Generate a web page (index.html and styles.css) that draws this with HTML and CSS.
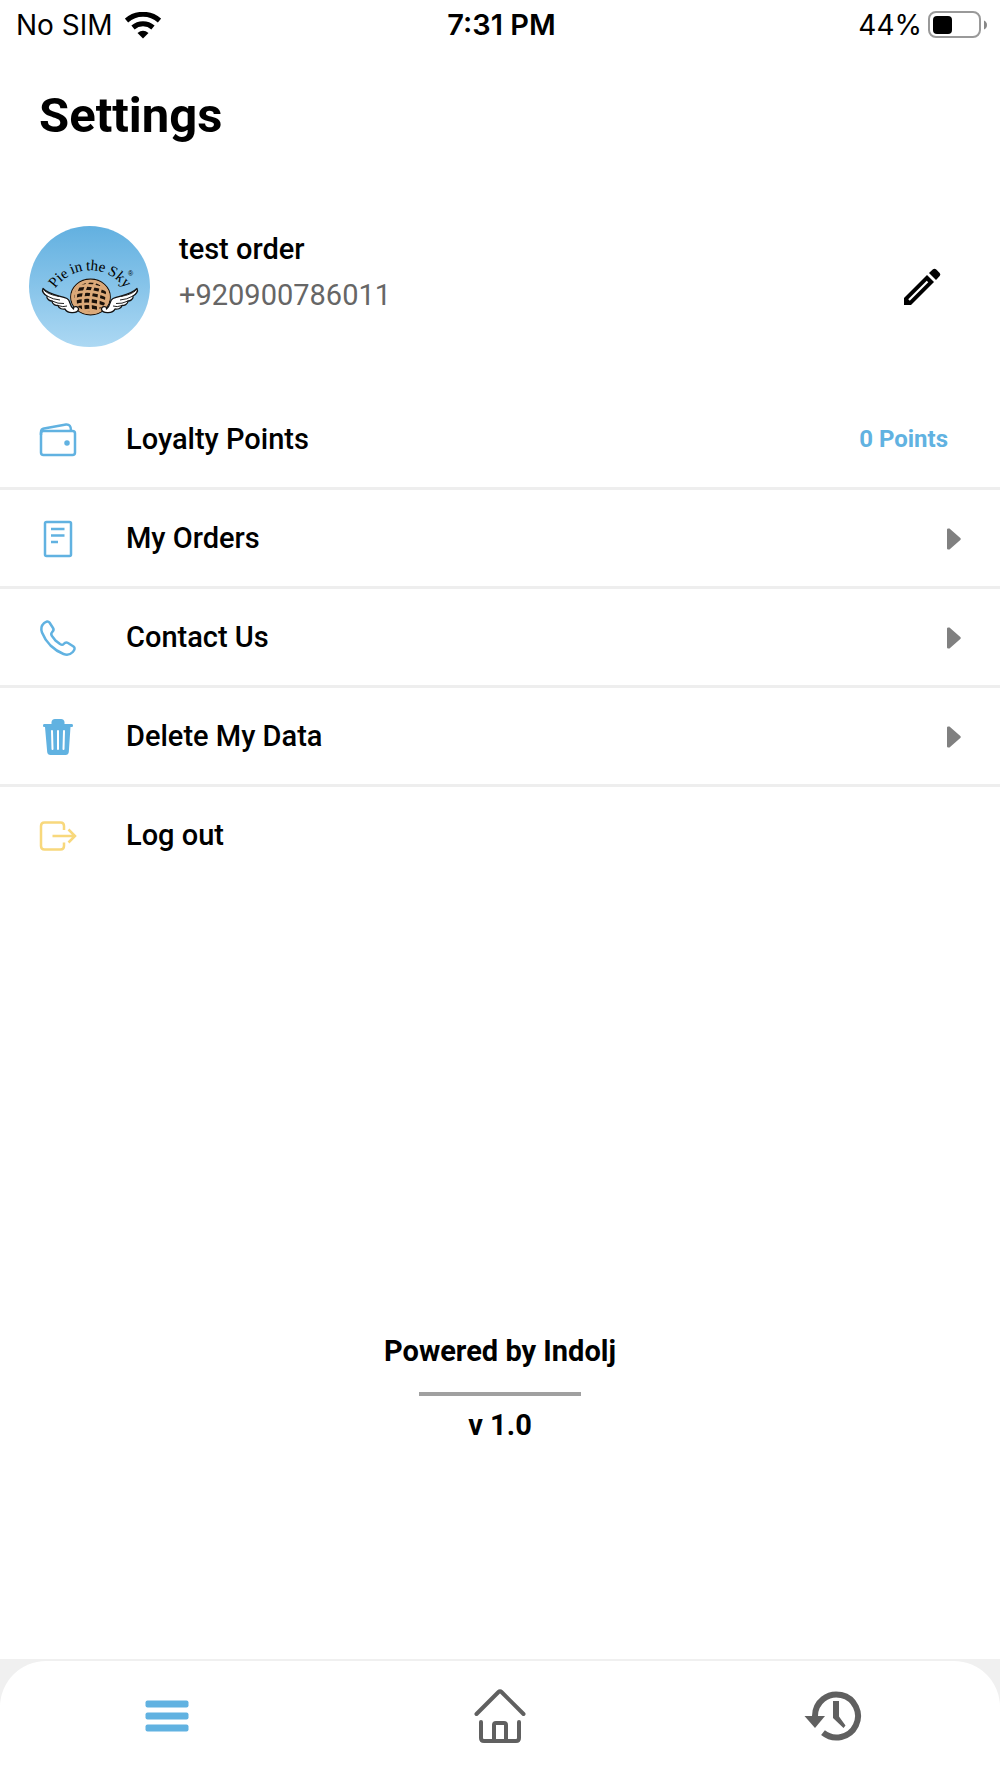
FILE: index.html
```html
<!DOCTYPE html>
<html lang="en">
<head>
<meta charset="utf-8">
<meta name="viewport" content="width=device-width, initial-scale=1">
<title>Settings</title>
<link rel="stylesheet" href="styles.css">
</head>
<body>
<div class="app">
  <div class="status-bar">
    <div class="carrier">
      <span>No SIM</span>
      <svg class="wifi" viewBox="0 0 36 27" aria-hidden="true">
        <path d="M1.500 8.500A25 25 0 0 1 34.500 8.500" fill="none" stroke="#000" stroke-width="5"/>
        <path d="M8 15.500A15.500 15.500 0 0 1 28 15.500" fill="none" stroke="#000" stroke-width="5"/>
        <path d="M12.500 21Q18 16.500 23.500 21L18 26.500Z"/>
      </svg>
    </div>
    <div class="clock">7:31 PM</div>
    <div class="power">
      <span>44%</span>
      <svg class="battery" viewBox="0 0 59 28" aria-hidden="true">
        <rect x="1" y="1" width="51" height="25" rx="7" fill="none" stroke="#999" stroke-width="2"/>
        <rect x="5" y="5" width="19" height="18" rx="4"/>
        <path d="M56 9.500Q59 11 59 14T56 18.500Z" fill="#888"/>
      </svg>
    </div>
  </div>

  <main class="main">
    <h1 class="title">Settings</h1>

    <section class="profile">
      <svg class="avatar" viewBox="0 0 121 121" role="img" aria-label="Pie in the Sky">
        <defs>
          <linearGradient id="sky" x1="0" y1="0" x2="0" y2="1">
            <stop offset="0" stop-color="#62b0e0"/>
            <stop offset="1" stop-color="#acd8f3"/>
          </linearGradient>
          <clipPath id="crust"><ellipse cx="61.500" cy="71" rx="18.500" ry="16.500"/></clipPath>
          <path id="arch" d="M21.500 72A42 42 0 0 1 100.500 72"/>
          <g id="wing">
            <path d="M14 62.500C12.500 65 15 68.500 18 70C17 73 21 75 23 75C23 78.500 27 79.500 29 79.500C30 83 34 83.500 36 83C38 87.500 48 88 49.500 83.500C50 80 44 79.500 44.500 83C40 80 42 74.500 38 72.500C31 69.500 20 69 14 62.500Z" fill="#fff" stroke="#111" stroke-width="1.300" stroke-linejoin="round"/>
            <path d="M14 63C18 68 24 69 30 70.500M18 70Q24 73.500 31 74M23 75Q29 78 35 77.500M29 79.500Q34 81.500 38 80" fill="none" stroke="#222" stroke-width="1"/>
          </g>
        </defs>
        <circle cx="60.500" cy="60.500" r="60.500" fill="url(#sky)"/>
        <text class="logo-text"><textPath href="#arch" startOffset="50%">Pie&thinsp;in&thinsp;the&thinsp;Sky</textPath></text>
        <text class="logo-mark" x="99" y="50">®</text>
        <ellipse cx="61.500" cy="71" rx="19.800" ry="17.800" fill="#dba979" stroke="#1c120a" stroke-width="1.200"/>
        <ellipse cx="61.500" cy="71" rx="16.500" ry="14.500" fill="#1c120a"/>
        <g clip-path="url(#crust)" fill="none" stroke="#dba979" stroke-width="2.600">
          <path d="M41 63Q62 54 83 67M41 69Q62 60 83 73M41 75Q62 66 83 79M41 81Q62 73 83 85M46 87Q62 80 80 90"/>
          <path d="M54 52Q42 68 49 90M61 52Q50 70 56 90M68 53Q58 70 63 90M75 54Q67 70 70 90M81 57Q76 70 77 90"/>
        </g>
        <ellipse cx="61.500" cy="71" rx="18" ry="16" fill="none" stroke="#dba979" stroke-width="2.600"/>
        <use href="#wing"/>
        <use href="#wing" transform="translate(122 0) scale(-1 1)"/>
      </svg>
      <div class="person">
        <div class="name">test order</div>
        <div class="phone">+920900786011</div>
      </div>
      <button class="edit" type="button" aria-label="Edit profile">
        <svg viewBox="0 0 38 38" aria-hidden="true">
          <path d="M1 37V30L24 7L31 14L8 37Z"/>
          <path d="M26 5L30 1.300Q31.500 0 33 1.300L36.700 5Q38 6.500 36.700 8L33 12Z"/>
          <path d="M6 32L24.500 13.500" stroke="#fff" stroke-width="2.200"/>
        </svg>
      </button>
    </section>

    <nav class="menu" aria-label="Settings">
      <a class="row" href="#loyalty">
        <svg class="row-icon line" viewBox="0 -1 36 36" aria-hidden="true">
          <rect x="1" y="9" width="34" height="24" rx="2.500"/>
          <path d="M1 13V10Q1 7 4 6.500L26 2.500Q31 2 31 8.500"/>
          <circle class="solid" cx="27" cy="21" r="1.500"/>
        </svg>
        <span>Loyalty Points</span>
        <span class="points">0 Points</span>
      </a>
      <a class="row" href="#orders">
        <svg class="row-icon line" viewBox="0 -1 36 36" aria-hidden="true">
          <rect x="5" y="1" width="26" height="34" rx="1.500"/>
          <path d="M11 8H24.500M11 14.500H24.500M11 21H18"/>
        </svg>
        <span>My Orders</span>
        <svg class="arrow" viewBox="0 -1 14 22" aria-hidden="true"><path d="M0 1.500Q0 0 2.500 0.600L13.300 10Q14.500 11 13.300 12L2.500 21.400Q0 22 0 20.500Z"/></svg>
      </a>
      <a class="row" href="#contact">
        <svg class="row-icon line" viewBox="0 -1 36 36" aria-hidden="true">
          <path d="M4 3.200Q7.500 0 9.500 2.500L13 8Q14.500 10.300 12 12.300Q10.500 13.700 12 16L15.500 20.500L20 24Q22.300 25.500 23.700 24Q25.700 21.500 28 23L33.500 26.500Q36 28.500 32.800 32Q29 36 23.500 34Q16.500 31.300 10.500 25.500Q4.700 19.500 2 12.500Q0 7 4 3.200Z"/>
        </svg>
        <span>Contact Us</span>
        <svg class="arrow" viewBox="0 -1 14 22" aria-hidden="true"><path d="M0 1.500Q0 0 2.500 0.600L13.300 10Q14.500 11 13.300 12L2.500 21.400Q0 22 0 20.500Z"/></svg>
      </a>
      <a class="row" href="#delete">
        <svg class="row-icon" viewBox="0 -1 36 36" aria-hidden="true">
          <path d="M11.500 5V3Q12 0 15 0H21Q24 0 24.500 3V5H32Q33 5 33 6.500T32 8H30.500L28.800 33Q28.500 36 25.500 36H10.500Q7.500 36 7.200 33L5 8H4Q3 8 3 6.500T4 5Z"/>
          <path class="slots" d="M12 12L12.500 30M18 12V30M24 12L23.500 30"/>
        </svg>
        <span>Delete My Data</span>
        <svg class="arrow" viewBox="0 -1 14 22" aria-hidden="true"><path d="M0 1.500Q0 0 2.500 0.600L13.300 10Q14.500 11 13.300 12L2.500 21.400Q0 22 0 20.500Z"/></svg>
      </a>
      <button class="row" type="button">
        <svg class="row-icon line logout" viewBox="0 -1 36 36" aria-hidden="true">
          <path d="M24 12V8Q24 4.500 20.500 4.500H4.500Q1 4.500 1 8V28Q1 31.500 4.500 31.500H20.500Q24 31.500 24 28V24.500M12.500 18H34.500M28.500 11.500L35 18L28.500 24.500"/>
        </svg>
        <span>Log out</span>
      </button>
    </nav>

    <footer class="about">
      <p>Powered by Indolj</p>
      <hr>
      <p>v 1.0</p>
    </footer>
  </main>

  <div class="tabs-wrap">
    <nav class="tabs" aria-label="Main">
      <a href="#menu" aria-label="Menu">
        <svg class="tab-menu" viewBox="0 0 44 56" aria-hidden="true">
          <rect x="0.500" y="12.500" width="43" height="7" rx="2"/>
          <rect x="0.500" y="24.500" width="43" height="7" rx="2"/>
          <rect x="0.500" y="36.500" width="43" height="7" rx="2"/>
        </svg>
      </a>
      <a href="#home" aria-label="Home">
        <svg class="tab-home" viewBox="0 0 52 56" aria-hidden="true"><path d="M2.500 26L24.500 4Q26 2.500 27.500 4L49.500 26M7 34V50Q7 53 10 53H42Q45 53 45 50V34M20 53V37Q20 35 22 35H30Q32 35 32 37V53"/></svg>
      </a>
      <a href="#history" aria-label="History">
        <svg class="tab-history" viewBox="0 0 58 56" aria-hidden="true">
          <path class="ring" d="M11 29V28A21.500 21.500 0 1 1 19 44.700"/>
          <path d="M0.500 28H21L11 40Z"/>
          <path d="M29 13H35V28.500L41.500 37.500L39.500 40L29 30Z"/>
        </svg>
      </a>
    </nav>
  </div>
</div>
</body>
</html>
```
FILE: styles.css
```css
* {
  box-sizing: border-box;
}

body {
  margin: 0;
  background: #fff;
  color: #000;
  font-family: Roboto, "Liberation Sans", sans-serif;
  font-size: 29px;
  line-height: 34px;
}

svg {
  display: block;
  flex: none;
}

a {
  color: inherit;
  text-decoration: none;
}

button {
  padding: 0;
  border: 0;
  background: none;
  color: inherit;
  font: inherit;
  text-align: left;
}

.app {
  display: flex;
  flex-direction: column;
  min-height: 100vh;
}

.status-bar {
  display: grid;
  grid-template-columns: 1fr auto 1fr;
  align-items: center;
  height: 50px;
  padding: 0 13px 0 16px;
  font-family: Inter, "Liberation Sans", sans-serif;
  font-size: 28px;
}

.carrier,
.power {
  display: flex;
  align-items: center;
}

.carrier {
  gap: 12px;
}

.power {
  justify-content: flex-end;
  gap: 6px;
}

.clock {
  font-weight: 600;
  font-size: 29px;
}

.wifi {
  width: 36px;
  height: 27px;
}

.battery {
  width: 59px;
  height: 28px;
}

.main {
  display: flex;
  flex: 1;
  flex-direction: column;
}

.title {
  margin: 37px 39px 0;
  font-size: 49px;
  font-weight: 700;
  line-height: 58px;
}

.profile {
  display: flex;
  align-items: center;
  margin-top: 81px;
  padding: 0 59px 0 29px;
}

.avatar {
  width: 121px;
  height: 121px;
}

.logo-text {
  font-family: "Liberation Serif", serif;
  font-size: 15px;
  text-anchor: middle;
}

.logo-mark {
  font-family: "Liberation Sans", sans-serif;
  font-size: 7px;
}

.person {
  display: flex;
  flex: 1;
  flex-direction: column;
  gap: 12px;
  margin: 0 0 30px 29px;
}

.name {
  font-weight: 500;
}

.phone {
  color: #666;
}

.edit {
  width: 38px;
}

.menu {
  margin-top: 44px;
}

.row {
  display: grid;
  grid-template-columns: 36px 1fr auto;
  align-items: center;
  gap: 50px;
  width: 100%;
  height: 99px;
  padding: 0 39px 0 40px;
  border-bottom: 3px solid #eee;
  font-weight: 500;
}

.row:last-child {
  border-bottom-color: transparent;
}

.row-icon {
  width: 36px;
  height: 36px;
  fill: #61b2e1;
  overflow: visible;
}

.line {
  fill: none;
  stroke: #61b2e1;
  stroke-width: 2.5;
}

.solid {
  fill: #61b2e1;
}

.slots {
  stroke: #fff;
  stroke-width: 2;
  stroke-linecap: round;
}

.logout {
  stroke: #f8d87c;
}

.points {
  margin-right: 13px;
  color: #61b2e1;
  font-size: 24px;
  font-weight: 700;
}

.arrow {
  width: 14px;
  height: 22px;
  fill: #808080;
  overflow: visible;
}

.about {
  margin-top: auto;
  padding: 48px 0 217px;
  font-weight: 700;
  text-align: center;
}

.about p {
  margin: 0;
}

.about hr {
  width: 162px;
  height: 4px;
  margin: 24px auto 12px;
  border: 0;
  background: #a0a0a0;
}

.tabs-wrap {
  padding-top: 2px;
  background: #f0f0f0;
}

.tabs {
  display: grid;
  grid-template-columns: repeat(3, 1fr);
  align-items: center;
  justify-items: center;
  height: 117px;
  padding-bottom: 7px;
  border-radius: 46px 46px 0 0;
  background: #fff;
}

.tab-menu {
  width: 44px;
  height: 56px;
  fill: #61b2e1;
}

.tab-home {
  width: 52px;
  height: 56px;
  fill: none;
  stroke: #606060;
  stroke-width: 4;
  stroke-linecap: round;
}

.tab-history {
  width: 58px;
  height: 56px;
  fill: #606060;
}

.ring {
  fill: none;
  stroke: #606060;
  stroke-width: 6;
}
```
